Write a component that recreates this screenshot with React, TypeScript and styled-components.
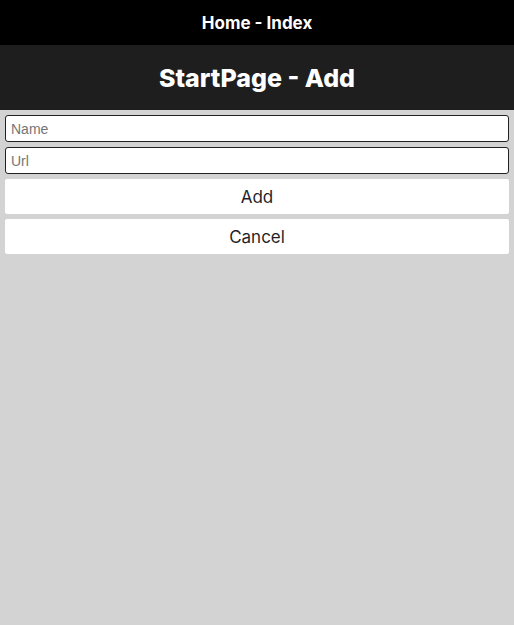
import React from "react";
import styled, { createGlobalStyle } from "styled-components";

const Global = createGlobalStyle`
  html, body { margin: 0; padding: 0; background: #d3d3d3; }
  body { font-family: "Inter", "Noto Sans", sans-serif; }
  * { box-sizing: border-box; }
`;

const Page = styled.div`
  min-height: 625px;
  background: #d3d3d3;
  display: flex;
  flex-direction: column;
`;

const TopBar = styled.header`
  height: 45px;
  background: #000;
  color: #fff;
  display: flex;
  align-items: center;
  justify-content: center;
  font-family: "Inter", sans-serif;
  font-weight: 700;
  font-size: 17px;
`;

const TitleBar = styled.div`
  height: 65px;
  background: #1e1e1e;
  color: #fff;
  display: flex;
  align-items: center;
  justify-content: center;
`;

const Title = styled.h1`
  margin: 0;
  font-family: "Inter", sans-serif;
  font-weight: 800;
  font-size: 25px;
`;

const Form = styled.form`
  display: flex;
  flex-direction: column;
  gap: 5px;
  padding: 5px;
`;

const Input = styled.input`
  height: 27px;
  width: 100%;
  border: 1px solid #222;
  border-radius: 3px;
  background: #fff;
  padding: 0 5px;
  font-family: "Liberation Sans", Arial, sans-serif;
  font-size: 14px;
  &::placeholder { color: #757575; }
`;

const Button = styled.button`
  height: 35px;
  width: 100%;
  border: none;
  border-radius: 2px;
  background: #fff;
  color: #1f1f2a;
  font-family: "Inter", sans-serif;
  font-size: 17px;
  font-weight: 400;
`;

export default function App() {
  return (
    <Page>
      <Global />
      <TopBar>Home - Index</TopBar>
      <TitleBar>
        <Title>StartPage - Add</Title>
      </TitleBar>
      <Form onSubmit={(e) => e.preventDefault()}>
        <Input placeholder="Name" />
        <Input placeholder="Url" />
        <Button type="submit">Add</Button>
        <Button type="button">Cancel</Button>
      </Form>
    </Page>
  );
}
